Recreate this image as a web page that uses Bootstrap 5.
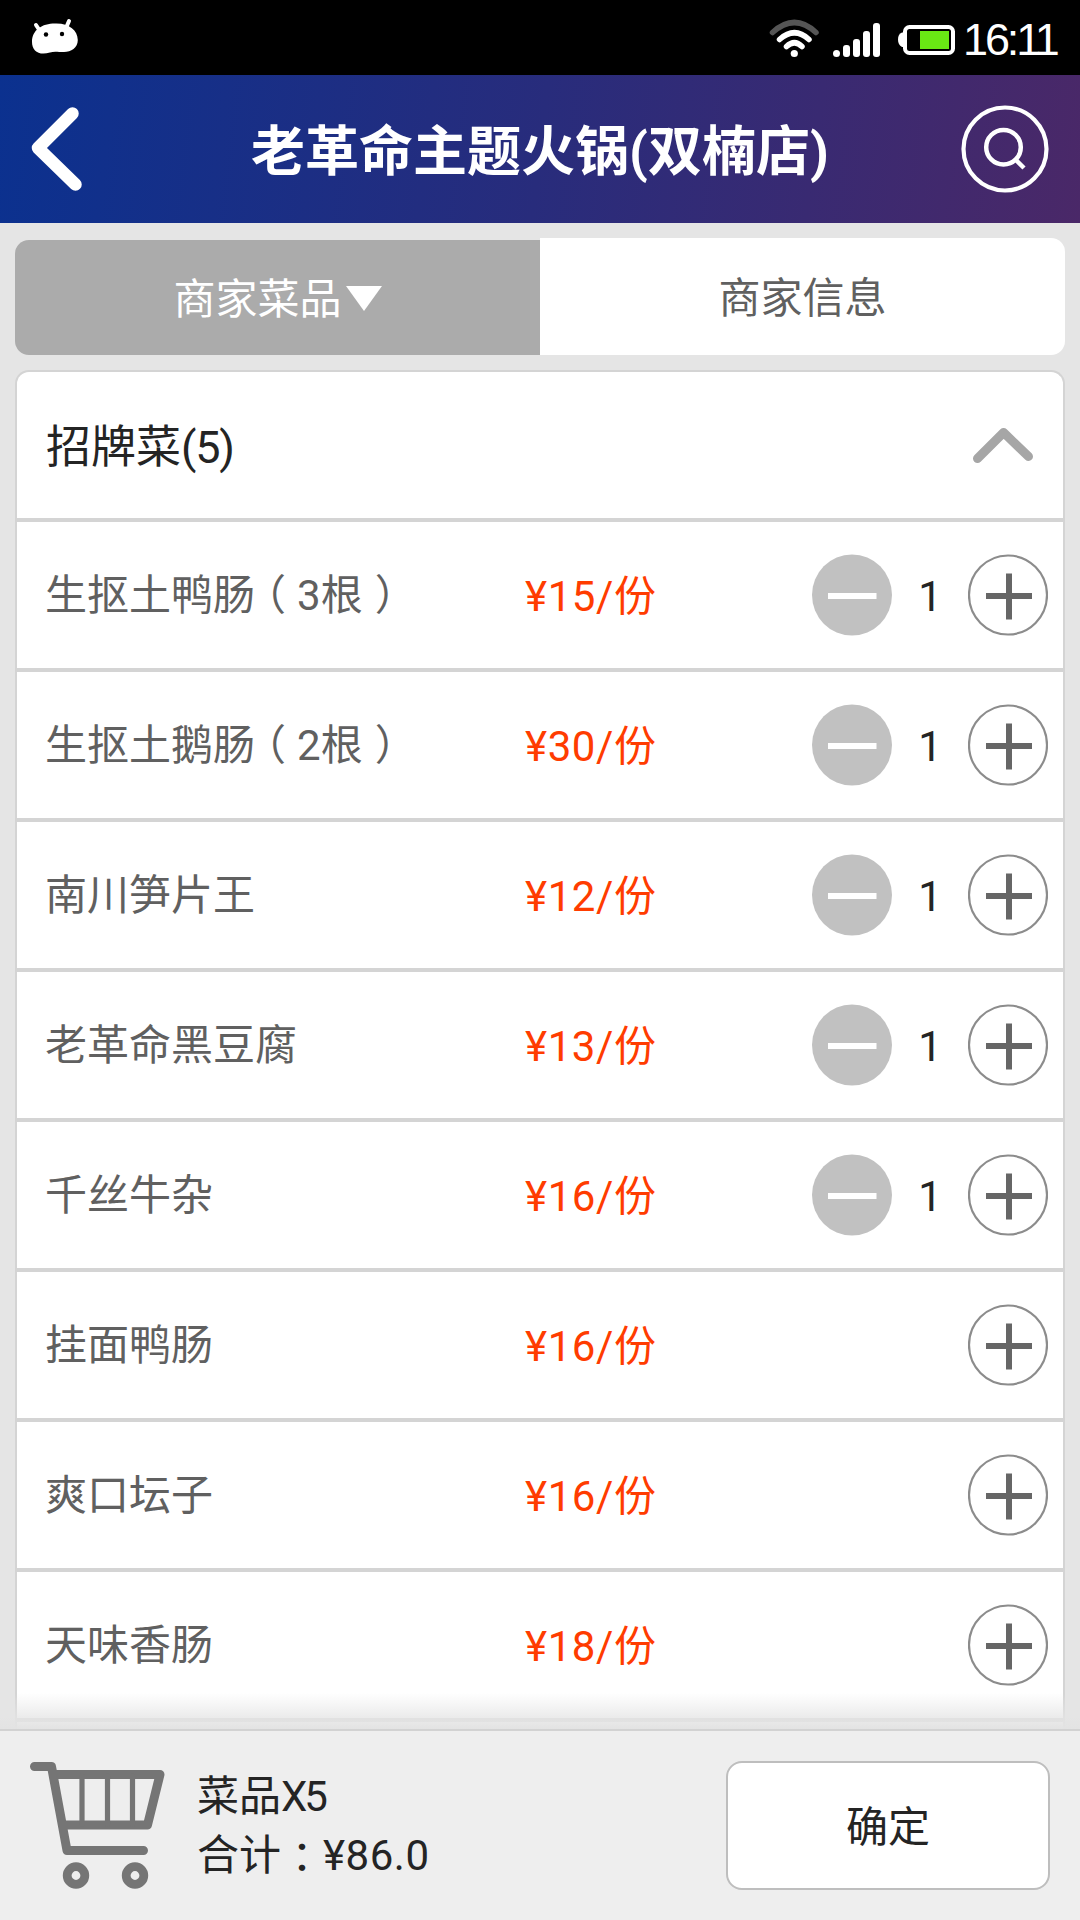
<!DOCTYPE html>
<html lang="zh-CN">
<head>
<meta charset="utf-8">
<meta name="viewport" content="width=device-width, initial-scale=1">
<title>老革命主题火锅(双楠店)</title>
<link href="https://cdn.jsdelivr.net/npm/bootstrap@5.3.0/dist/css/bootstrap.min.css" rel="stylesheet">
<style>
  body { background: #e5e5e5; color: #242424; font-family: Roboto, "Noto Sans CJK SC", sans-serif; font-size: 42px; line-height: 60px; }
  svg { display: block; flex: none; }
  .screen { height: 1920px; }
  .statusbar { height: 75px; background: #000; padding: 0 22px 0 30px; }
  .clock { font: 400 45px/60px "Liberation Sans", Arial, sans-serif; color: #fff; letter-spacing: -3.1px; width: 95px; margin-left: 6px; padding-top: 5px; white-space: nowrap; }
  .topbar { height: 148px; background: linear-gradient(97deg, #0b318f 0%, #282c7c 50%, #4a2868 100%); padding: 0 26px; }
  .topbar h1 { font-size: 54px; line-height: 80px; color: #fff; padding-top: 8px; }
  .icon-btn { border: 0; background: none; padding: 0; }
  .tabs { padding: 15px 15px 0; height: 132px; }
  .tab-item { flex: 1 1 0; border: 0; padding: 0; line-height: 60px; }
  .tab-dishes { background: #ababab; color: #fff; margin-top: 2px; border-radius: 14px 0 0 14px; }
  .tab-info { background: #fff; color: #606060; border-radius: 0 14px 14px 0; }
  .tab-item span { padding-top: 5px; display: inline-block; }
  .dish-wrap { padding: 15px 15px 0; height: 1374px; overflow: hidden; }
  .dish-card { border: 2px solid #d4d4d4; border-bottom: 0; border-radius: 14px 14px 0 0; background: #fff; height: 1374px; }
  .group-head { height: 150px; border-bottom: 4px solid #d4d4d4; padding: 0 29px 0 29px; font-size: 45px; }
  .group-head > span { padding-top: 5px; }
  .group-count { letter-spacing: -1.2px; }
  .dish { height: 150px; border-bottom: 4px solid #d4d4d4; padding: 0 15px 0 28px; }
  .dish-name { width: 480px; color: #606060; padding-top: 1px; }
  .dish-price { color: #ff3c00; letter-spacing: .6px; padding-top: 4px; }
  .wide-punct { font-family: "Noto Sans CJK TC", sans-serif; line-height: 0; }
  .punct-open, .punct-close { font-feature-settings: "halt"; }
  .punct-open { margin: 0 11px 0 10px; }
  .punct-close { margin: 0 9px 0 12px; }
  .punct-colon { vertical-align: -3px; }
  .qty { width: 76px; text-align: center; padding: 4px 0 0 0; }
  .fade-edge { left: 0; right: 0; bottom: 0; height: 36px; background: linear-gradient(rgba(229,229,229,0), rgba(229,229,229,.75) 66%, #e3e3e3); }
  .cartbar { height: 191px; background: #eee; border-top: 2px solid #d2d2d2; padding: 0 30px 0 28px; }
  .cart-sum { line-height: 59px; margin-left: 29px; padding-top: 1px; }
  .cart-count { letter-spacing: -3px; }
  .cart-total { letter-spacing: .5px; }
  .confirm { width: 324px; height: 129px; border: 2px solid #bebebe; border-radius: 16px; background: #fff; color: #242424; font-size: 42px; line-height: 60px; padding: 5px 0 0; }
</style>
<script src="https://cdn.jsdelivr.net/npm/bootstrap@5.3.0/dist/js/bootstrap.bundle.min.js"></script>
</head>
<body>
<svg width="0" height="0" class="position-absolute" aria-hidden="true">
  <symbol id="plus" viewBox="0 0 80 82"><ellipse cx="40" cy="41" rx="39" ry="39.500" fill="#fff" stroke="#8c8c8c" stroke-width="2.200"/><path d="M18 42H64M41 19.500V65.500" stroke="#666" stroke-width="6"/></symbol>
  <symbol id="minus" viewBox="0 0 80 82"><ellipse cx="40" cy="41" rx="40" ry="40.500" fill="#c1c1c1"/><path d="M16 42H64.500" stroke="#fff" stroke-width="6"/></symbol>
</svg>
<div class="screen d-flex flex-column overflow-hidden">
  <div class="statusbar d-flex align-items-center">
    <svg class="me-auto" width="50" height="75" viewBox="30 0 50 75"><path d="M36 25l4 6M69 21l-3 7" stroke="#fff" stroke-width="4" stroke-linecap="round"/><path d="M32 42C32 30 42 23.500 55 23.500C69 23 77.500 30 77.800 40C77.800 48 71 52 64 52C58 52 54 51 50 52.500C39 56 32 51 32 42Z" fill="#fff"/><circle cx="46" cy="34.500" r="2.200"/><circle cx="62" cy="34" r="2.200"/></svg>
    <svg width="190" height="75" viewBox="767 0 190 75"><g fill="none" stroke-width="5.500" stroke-linecap="round"><path d="M772.500 32.500Q794.500 12.500 816 32.500" stroke="#555"/><path d="M779.500 39.500Q794.500 26 809 39.500M786.500 46.500Q794.500 39 802 46.500" stroke="#fff"/></g><circle cx="794.300" cy="53.500" r="3.600" fill="#fff"/>
      <g fill="#fff"><rect x="833" y="50" width="7" height="7" rx="3.500"/><rect x="843" y="45" width="7" height="12" rx="3"/><rect x="853" y="39" width="7" height="18" rx="3"/><rect x="863" y="31" width="7" height="26" rx="3"/><rect x="873" y="23" width="7" height="34" rx="3"/><path d="M904 32.500h-2q-4 1.500-4 7t4 7.500h2z"/></g>
      <rect x="905" y="27" width="48" height="26" rx="4.500" fill="none" stroke="#fff" stroke-width="4"/><path d="M920 31h29v18h-29z" fill="#69e814"/></svg>
    <div class="clock">16:11</div>
  </div>
  <header class="topbar d-flex align-items-center justify-content-between">
    <button class="icon-btn" aria-label="返回"><svg width="88" height="148" viewBox="26 75 88 148"><path d="M72.500 113.500L38 148L75.500 184.500" fill="none" stroke="#fff" stroke-width="12.500" stroke-linecap="round" stroke-linejoin="round"/></svg></button>
    <h1 class="fw-bold m-0">老革命主题火锅(双楠店)</h1>
    <button class="icon-btn" aria-label="搜索"><svg width="88" height="148" viewBox="966 75 88 148" overflow="visible"><g fill="none" stroke="#fff"><circle cx="1005" cy="149" r="41.500" stroke-width="4.200"/><circle cx="1003.500" cy="147.200" r="17.300" stroke-width="4.500"/><path d="M1016 160L1024 168" stroke-width="4.500"/></g></svg></button>
  </header>
  <nav class="tabs d-flex">
    <button class="tab-item tab-dishes d-flex align-items-center justify-content-center"><span>商家菜品</span><svg class="ms-1" width="36" height="26" viewBox="0 0 36 26"><path d="M0 1H36L18 26Z" fill="#fff"/></svg></button>
    <button class="tab-item tab-info"><span>商家信息</span></button>
  </nav>
  <main class="dish-wrap position-relative">
    <section class="dish-card">
      <div class="group-head d-flex align-items-center justify-content-between"><span>招牌菜<span class="group-count">(5)</span></span>
        <svg width="62" height="40" viewBox="972 425 62 40"><path d="M977.500 458.500L1003.600 432.500L1028.500 456.500" fill="none" stroke="#a6a6a6" stroke-width="9" stroke-linecap="round" stroke-linejoin="round"/></svg></div>
      <div class="dish d-flex align-items-center"><span class="dish-name">生抠土鸭肠<span class="wide-punct punct-open" lang="zh-TW">（</span>3根<span class="wide-punct punct-close" lang="zh-TW">）</span></span><span class="dish-price">¥15/份</span><svg class="ms-auto" width="80" height="82"><use href="#minus"/></svg><span class="qty">1</span><svg width="80" height="82"><use href="#plus"/></svg></div>
      <div class="dish d-flex align-items-center"><span class="dish-name">生抠土鹅肠<span class="wide-punct punct-open" lang="zh-TW">（</span>2根<span class="wide-punct punct-close" lang="zh-TW">）</span></span><span class="dish-price">¥30/份</span><svg class="ms-auto" width="80" height="82"><use href="#minus"/></svg><span class="qty">1</span><svg width="80" height="82"><use href="#plus"/></svg></div>
      <div class="dish d-flex align-items-center"><span class="dish-name">南川笋片王</span><span class="dish-price">¥12/份</span><svg class="ms-auto" width="80" height="82"><use href="#minus"/></svg><span class="qty">1</span><svg width="80" height="82"><use href="#plus"/></svg></div>
      <div class="dish d-flex align-items-center"><span class="dish-name">老革命黑豆腐</span><span class="dish-price">¥13/份</span><svg class="ms-auto" width="80" height="82"><use href="#minus"/></svg><span class="qty">1</span><svg width="80" height="82"><use href="#plus"/></svg></div>
      <div class="dish d-flex align-items-center"><span class="dish-name">千丝牛杂</span><span class="dish-price">¥16/份</span><svg class="ms-auto" width="80" height="82"><use href="#minus"/></svg><span class="qty">1</span><svg width="80" height="82"><use href="#plus"/></svg></div>
      <div class="dish d-flex align-items-center"><span class="dish-name">挂面鸭肠</span><span class="dish-price">¥16/份</span><svg class="ms-auto" width="80" height="82"><use href="#plus"/></svg></div>
      <div class="dish d-flex align-items-center"><span class="dish-name">爽口坛子</span><span class="dish-price">¥16/份</span><svg class="ms-auto" width="80" height="82"><use href="#plus"/></svg></div>
      <div class="dish d-flex align-items-center"><span class="dish-name">天味香肠</span><span class="dish-price">¥18/份</span><svg class="ms-auto" width="80" height="82"><use href="#plus"/></svg></div>
    </section>
    <div class="fade-edge position-absolute"></div>
  </main>
  <footer class="cartbar d-flex align-items-center">
    <svg width="140" height="140" viewBox="28 1756 140 140"><g fill="none" stroke="#757575" stroke-linecap="round" stroke-linejoin="round"><path d="M34.500 1766.500H51.500L67 1850.500H143.500M53 1774.500H160L147.500 1825H63" stroke-width="9"/><path d="M82 1776V1824M107.500 1776V1824M132.500 1776V1824" stroke-width="5.200"/><circle cx="76" cy="1875.500" r="8.800" stroke-width="8.800"/><circle cx="135" cy="1875.500" r="8.800" stroke-width="8.800"/></g></svg>
    <div class="cart-sum"><div>菜品<span class="cart-count">X5</span></div><div>合计<span class="wide-punct punct-colon" lang="zh-TW">：</span><span class="cart-total">¥86.0</span></div></div>
    <button class="confirm ms-auto">确定</button>
  </footer>
</div>
</body>
</html>
